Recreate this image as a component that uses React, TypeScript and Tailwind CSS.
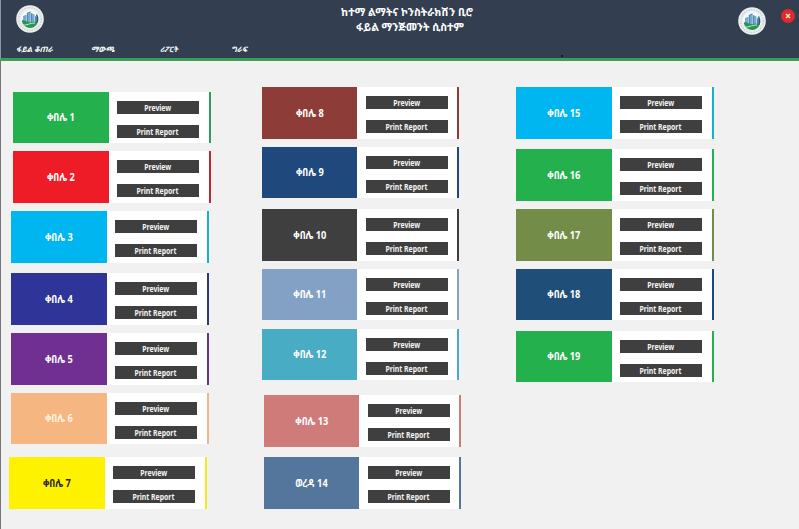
import React from 'react';

type Unit = {
  name: string;
  number: number;
  color: string;
  strip: string;
  place: string;
  text?: string;
};

const firstColumn: Unit[] = [
  { name: 'ቀበሌ', number: 1, color: 'bg-[#24b14d]', strip: 'bg-[#2f9e57]', place: 'ml-[4px] h-[51px]' },
  { name: 'ቀበሌ', number: 2, color: 'bg-[#ed1c27]', strip: 'bg-[#c0272f]', place: 'ml-[4px] mt-[8px] h-[52px]' },
  { name: 'ቀበሌ', number: 3, color: 'bg-[#00b6f1]', strip: 'bg-[#18b0ca]', place: 'ml-[2px] mt-[8px] h-[52px]' },
  { name: 'ቀበሌ', number: 4, color: 'bg-[#2e3498]', strip: 'bg-[#2e3480]', place: 'ml-[2px] mt-[10px] h-[52px]' },
  { name: 'ቀበሌ', number: 5, color: 'bg-[#703092]', strip: 'bg-[#693488]', place: 'ml-[2px] mt-[8px] h-[52px]' },
  { name: 'ቀበሌ', number: 6, color: 'bg-[#f5b681]', strip: 'bg-[#f1b68c]', place: 'ml-[2px] mt-[8px] h-[51px]', text: 'text-[#fff3e0]' },
  { name: 'ቀበሌ', number: 7, color: 'bg-[#fff200]', strip: 'bg-[#f5ea20]', place: 'mt-[13px] h-[52px]', text: 'text-[#29240a]' },
];

const secondColumn: Unit[] = [
  { name: 'ቀበሌ', number: 8, color: 'bg-[#8e3c38]', strip: 'bg-[#8e3c38]', place: 'h-[52px]' },
  { name: 'ቀበሌ', number: 9, color: 'bg-[#1f497d]', strip: 'bg-[#1f497d]', place: 'mt-[8px] h-[51px]' },
  { name: 'ቀበሌ', number: 10, color: 'bg-[#3f3f3f]', strip: 'bg-[#3f3f3f]', place: 'mt-[11px] h-[52px]' },
  { name: 'ቀበሌ', number: 11, color: 'bg-[#83a1c5]', strip: 'bg-[#83a1c5]', place: 'mt-[8px] h-[51px]' },
  { name: 'ቀበሌ', number: 12, color: 'bg-[#49acc5]', strip: 'bg-[#49acc5]', place: 'mt-[9px] h-[51px]' },
  { name: 'ቀበሌ', number: 13, color: 'bg-[#cf7b79]', strip: 'bg-[#cf7b79]', place: 'ml-[2px] mt-[15px] h-[52px]' },
  { name: 'ወረዳ', number: 14, color: 'bg-[#54759c]', strip: 'bg-[#54759c]', place: 'ml-[2px] mt-[10px] h-[52px]' },
];

const thirdColumn: Unit[] = [
  { name: 'ቀበሌ', number: 15, color: 'bg-[#00b6f1]', strip: 'bg-[#18b0ca]', place: 'h-[52px]' },
  { name: 'ቀበሌ', number: 16, color: 'bg-[#24b14d]', strip: 'bg-[#24b14d]', place: 'mt-[10px] h-[52px]' },
  { name: 'ቀበሌ', number: 17, color: 'bg-[#738c48]', strip: 'bg-[#738c48]', place: 'mt-[8px] h-[52px]' },
  { name: 'ቀበሌ', number: 18, color: 'bg-[#1f4e79]', strip: 'bg-[#1f497d]', place: 'mt-[8px] h-[51px]' },
  { name: 'ቀበሌ', number: 19, color: 'bg-[#24b14d]', strip: 'bg-[#24b14d]', place: 'mt-[11px] h-[51px]' },
];

function Action({ label }: { label: string }) {
  return (
    <button className="flex h-[13px] w-[82px] items-center justify-center bg-[#3f3f3f] pr-px text-[8px] leading-none font-bold whitespace-nowrap text-[#f4f4f4]">
      <span className="scale-x-[.86]">{label}</span>
    </button>
  );
}

function Card({ unit, narrow = false }: { unit: Unit; narrow?: boolean }) {
  return (
    <article className={`flex shrink-0 bg-white ${narrow ? 'w-[197px]' : 'w-[198px]'} ${unit.place}`}>
      <h2
        className={`flex items-center justify-center text-[10.5px] leading-none font-bold whitespace-nowrap ${narrow ? 'w-[95px]' : 'w-[96px]'} ${unit.color} ${unit.text ?? 'text-white'}`}
      >
        <span className="scale-x-[.88]">
          {unit.name} {unit.number}
        </span>
      </h2>
      <div className={`flex flex-1 flex-col gap-[11px] pt-[9px] ${narrow ? 'pl-[9px]' : 'pl-[8px]'}`}>
        <Action label="Preview" />
        <Action label="Print Report" />
      </div>
      <div className={`w-[2px] ${unit.strip}`} />
    </article>
  );
}

function Seal({ className }: { className: string }) {
  return (
    <svg viewBox="0 0 28 28" className={`h-[28px] w-[28px] ${className}`}>
      <circle cx="14" cy="14" r="13.8" fill="#eceff0" />
      <circle cx="14" cy="14" r="11.4" fill="none" stroke="#c6cbcf" strokeWidth="1.5" strokeDasharray="1.2 1.3" />
      <circle cx="14" cy="14" r="9" fill="#f8fafa" />
      <path d="M7.3 18V11l3-1v8zM10.8 18V8l3.7-1.7V18zM15 18V8l3.4 1.4V18zM19 18v-7l2.5 1v6z" fill="#4b8cba" />
      <path d="M13 8v10M17 9v9M9 11v7" stroke="#c4e0ef" strokeWidth=".7" />
      <path d="M20.5 9.5c2 3.5 1.6 8-1.7 10.7" fill="none" stroke="#315a80" strokeWidth="1.5" />
      <path d="M5.7 15.5c3.2-1.2 5.8 2.4 9.3 1.7 2.4-.5 4.2-.6 6.5.2-1.2 3.5-4 5.5-7.5 5.5-4.4 0-7.6-3-8.3-7.4Z" fill="#279653" />
      <path d="M7 20c4 .5 6-1.8 12-2" fill="none" stroke="#d9eddb" strokeWidth=".9" />
    </svg>
  );
}

export default function App() {
  return (
    <div className="flex h-[529px] w-[799px] flex-col overflow-hidden bg-[#f1f1f1] font-['Noto_Sans','Noto_Sans_Ethiopic',sans-serif]">
      <header className="flex h-[61px] shrink-0 flex-col border-b-[3px] border-l border-b-[#38a057] border-l-[#8c939c] bg-[#333f50] text-white">
        <div className="flex h-[40px] shrink-0 items-start">
          <Seal className="mt-[5px] ml-[15px] shrink-0" />
          <h1 className="ml-[263px] w-[200px] shrink-0 pt-[5px] text-center text-[10.5px] leading-[15px] font-bold whitespace-nowrap">
            ከተማ ልማትና ኮንስትራክሽን ቢሮ
            <br />
            <span className="pl-[6px]">ፋይል ማንጅመንት ሲስተም</span>
          </h1>
          <Seal className="mt-[7px] ml-[231px] shrink-0" />
          <button aria-label="Close" className="mt-[9px] ml-[15px] flex h-[14px] w-[14px] shrink-0 items-center justify-center rounded-full bg-[#dc2b30]">
            <svg viewBox="0 0 6 6" className="h-[6px] w-[6px]">
              <path d="M1 1l4 4M5 1L1 5" stroke="#ffdcae" strokeWidth="1.5" />
            </svg>
          </button>
        </div>
        <nav className="flex h-[18px] items-center pt-px pl-[15px] text-[7.5px] leading-none font-bold whitespace-nowrap italic">
          <a className="w-[75px]">ፋይል ቆጠራ</a>
          <a className="w-[69px]">ማውጫ</a>
          <a className="w-[71px]">ሪፖርት</a>
          <a>ግራፍ</a>
          <i className="mr-[236px] mb-px ml-auto h-[2px] w-[2px] self-end bg-[#121820]" />
        </nav>
      </header>
      <main className="flex flex-1 items-start border-l border-[#77777b]">
        <section className="ml-[8px] w-[253px] pt-[31px]">
          {firstColumn.map((unit) => (
            <Card key={unit.number} unit={unit} />
          ))}
        </section>
        <section className="w-[254px] pt-[26px]">
          {secondColumn.map((unit) => (
            <Card key={unit.number} unit={unit} narrow />
          ))}
        </section>
        <section className="pt-[26px]">
          {thirdColumn.map((unit) => (
            <Card key={unit.number} unit={unit} />
          ))}
        </section>
      </main>
    </div>
  );
}
